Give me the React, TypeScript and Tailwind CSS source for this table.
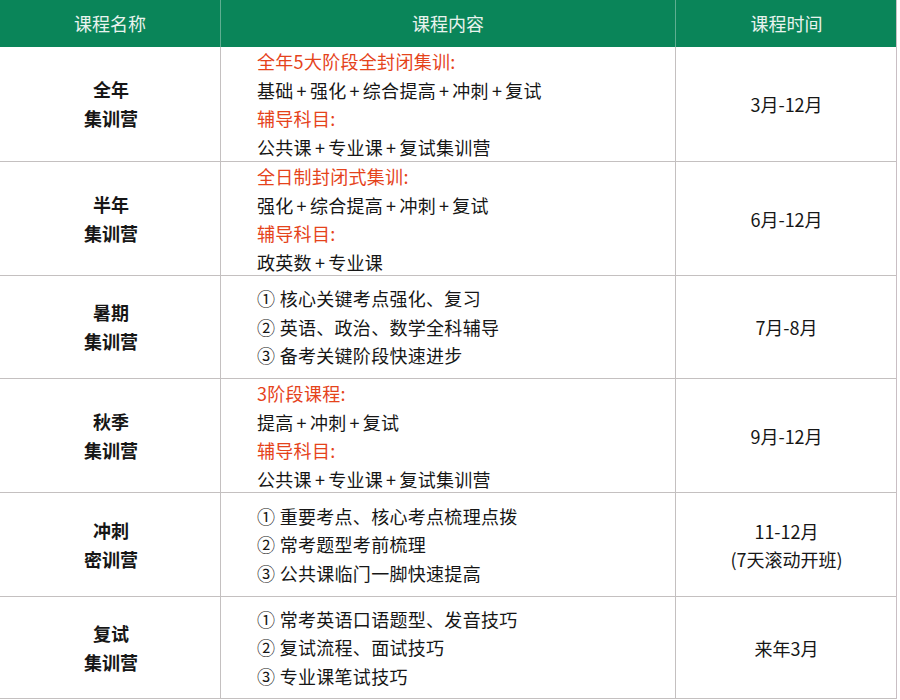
import React from "react";

type Line = { text: string; red?: boolean };

type Course = {
  name: [string, string];
  lines: Line[];
  time: string[];
  h: string;
};

const COURSES: Course[] = [
  {
    name: ["全年", "集训营"],
    lines: [
      { text: "全年5大阶段全封闭集训:", red: true },
      { text: "基础+强化+综合提高+冲刺+复试" },
      { text: "辅导科目:", red: true },
      { text: "公共课+专业课+复试集训营" },
    ],
    time: ["3月-12月"],
    h: "h-[115px]",
  },
  {
    name: ["半年", "集训营"],
    lines: [
      { text: "全日制封闭式集训:", red: true },
      { text: "强化+综合提高+冲刺+复试" },
      { text: "辅导科目:", red: true },
      { text: "政英数+专业课" },
    ],
    time: ["6月-12月"],
    h: "h-[114px]",
  },
  {
    name: ["暑期", "集训营"],
    lines: [
      { text: "① 核心关键考点强化、复习" },
      { text: "② 英语、政治、数学全科辅导" },
      { text: "③ 备考关键阶段快速进步" },
    ],
    time: ["7月-8月"],
    h: "h-[103px]",
  },
  {
    name: ["秋季", "集训营"],
    lines: [
      { text: "3阶段课程:", red: true },
      { text: "提高+冲刺+复试" },
      { text: "辅导科目:", red: true },
      { text: "公共课+专业课+复试集训营" },
    ],
    time: ["9月-12月"],
    h: "h-[114px]",
  },
  {
    name: ["冲刺", "密训营"],
    lines: [
      { text: "① 重要考点、核心考点梳理点拨" },
      { text: "② 常考题型考前梳理" },
      { text: "③ 公共课临门一脚快速提高" },
    ],
    time: ["11-12月", "(7天滚动开班)"],
    h: "h-[104px]",
  },
  {
    name: ["复试", "集训营"],
    lines: [
      { text: "① 常考英语口语题型、发音技巧" },
      { text: "② 复试流程、面试技巧" },
      { text: "③ 专业课笔试技巧" },
    ],
    time: ["来年3月"],
    h: "h-[102px]",
  },
];

const cols = "grid grid-cols-[221px_455px_221px]";

// the "+" in the original font is wider than Noto's, pad it a little
function withPlus(text: string) {
  const parts = text.split("+");
  return parts.map((p, i) => (
    <React.Fragment key={i}>
      {i > 0 ? <span className="px-[3px]">+</span> : null}
      {p}
    </React.Fragment>
  ));
}

export default function App() {
  return (
    <div
      className="w-[900px] h-[700px] bg-white text-[#161616]"
      style={{ fontFamily: '"Microsoft YaHei", "Noto Sans CJK SC", sans-serif' }}
    >
      <div className="w-[897px] border-r border-[#c9bfc4]">
        <div className={`${cols} h-[47px] bg-[#0a8559] text-[18px] text-[#e8f3ee]`}>
          <div className="flex items-center justify-center border-r border-[#5fae91]">课程名称</div>
          <div className="flex items-center justify-center border-r border-[#5fae91]">课程内容</div>
          <div className="flex items-center justify-center">课程时间</div>
        </div>

        {COURSES.map((c) => (
          <div key={c.name.join("")} className={`${cols} ${c.h} border-b border-[#c4c0c0] text-[18px]`}>
            <div className="flex flex-col items-center justify-center border-r border-[#c4c0c0] font-bold leading-[29px] pl-[2px]">
              <div>{c.name[0]}</div>
              <div>{c.name[1]}</div>
            </div>
            <div className="flex flex-col justify-center border-r border-[#c4c0c0] pl-[36px] leading-[28.5px] tracking-[0.3px] whitespace-nowrap">
              {c.lines.map((l) => (
                <div key={l.text} className={l.red ? "text-[#e5431b]" : ""}>
                  {withPlus(l.text)}
                </div>
              ))}
            </div>
            <div className="flex flex-col items-center justify-center leading-[28px]">
              {c.time.map((t) => (
                <div key={t}>{t}</div>
              ))}
            </div>
          </div>
        ))}
      </div>
    </div>
  );
}
